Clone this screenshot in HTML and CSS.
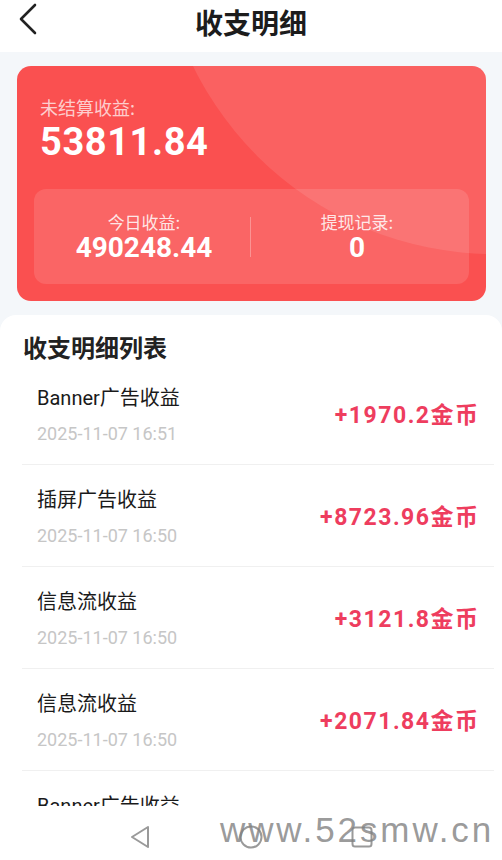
FILE: index.html
```html
<!DOCTYPE html>
<html lang="zh-CN">
<head>
<meta charset="utf-8">
<title>收支明细</title>
<link rel="stylesheet" href="styles.css">
</head>
<body>
<div class="page">
  <header class="topbar">
    <svg class="back" width="20" height="32" viewBox="0 0 20 32"><path d="M17 2 L3 16 L17 30" fill="none" stroke="#222" stroke-width="2.6" stroke-linecap="round" stroke-linejoin="round"/></svg>
    <h1 class="title">收支明细</h1>
  </header>
  <main class="content">
    <section class="card">
      <div class="card-glow"></div>
      <div class="card-label">未结算收益:</div>
      <div class="card-amount">53811.84</div>
      <div class="card-stats">
        <div class="stat">
          <div class="stat-label">今日收益:</div>
          <div class="stat-value">490248.44</div>
        </div>
        <div class="stat-divider"></div>
        <div class="stat">
          <div class="stat-label">提现记录:</div>
          <div class="stat-value">0</div>
        </div>
      </div>
    </section>
    <section class="list">
      <h2 class="list-title">收支明细列表</h2>
      <div class="item">
        <div class="item-info">
          <div class="item-name">Banner广告收益</div>
          <div class="item-date">2025-11-07 16:51</div>
        </div>
        <div class="item-amount">+1970.2金币</div>
      </div>
      <div class="item">
        <div class="item-info">
          <div class="item-name">插屏广告收益</div>
          <div class="item-date">2025-11-07 16:50</div>
        </div>
        <div class="item-amount">+8723.96金币</div>
      </div>
      <div class="item">
        <div class="item-info">
          <div class="item-name">信息流收益</div>
          <div class="item-date">2025-11-07 16:50</div>
        </div>
        <div class="item-amount">+3121.8金币</div>
      </div>
      <div class="item">
        <div class="item-info">
          <div class="item-name">信息流收益</div>
          <div class="item-date">2025-11-07 16:50</div>
        </div>
        <div class="item-amount">+2071.84金币</div>
      </div>
      <div class="item">
        <div class="item-info">
          <div class="item-name">Banner广告收益</div>
          <div class="item-date">2025-11-07 16:50</div>
        </div>
        <div class="item-amount">+1520.6金币</div>
      </div>
    </section>
  </main>
  <nav class="navbar">
    <svg class="nav-icon" width="22" height="24" viewBox="0 0 22 24"><path d="M19 2 L3 12 L19 22 Z" fill="none" stroke="#9a9a9a" stroke-width="2" stroke-linejoin="round"/></svg>
    <svg class="nav-icon" width="24" height="24" viewBox="0 0 24 24"><circle cx="12" cy="12" r="10.5" fill="none" stroke="#9a9a9a" stroke-width="2"/></svg>
    <svg class="nav-icon" width="22" height="22" viewBox="0 0 22 22"><rect x="1.5" y="1.5" width="19" height="19" rx="2.5" fill="none" stroke="#9a9a9a" stroke-width="2"/></svg>
    <div class="watermark">www.52smw.cn</div>
  </nav>
</div>
</body>
</html>
```
FILE: styles.css
```css
* { box-sizing: border-box; margin: 0; padding: 0; }
html, body { width: 502px; height: 860px; overflow: hidden; }
body {
  font-family: Roboto, "Noto Sans CJK SC", sans-serif;
  background: #f4f7fa;
  color: #1f1f1f;
}
.page { height: 860px; display: flex; flex-direction: column; }
.topbar {
  height: 52px;
  flex-shrink: 0;
  background: #ffffff;
  display: flex;
  align-items: center;
  justify-content: center;
  position: relative;
}
.back { position: absolute; left: 18px; top: 3px; }
.title {
  font-size: 28px;
  font-weight: 700;
  color: #1c1c1c;
  line-height: 40px;
  margin-top: -8px;
  font-family: "Noto Sans CJK SC", sans-serif;
}
.content {
  flex: 1;
  min-height: 0;
  overflow: hidden;
  padding-top: 14px;
  display: flex;
  flex-direction: column;
}
.card {
  flex-shrink: 0;
  margin: 0 16px 0 17px;
  height: 235px;
  border-radius: 14px;
  background: #fa5050;
  position: relative;
  overflow: hidden;
  padding: 28px 17px 0 17px;
  color: #fff;
}
.card-glow {
  position: absolute;
  left: 142px;
  top: -482px;
  width: 670px;
  height: 670px;
  border-radius: 50%;
  background: rgba(255, 255, 255, 0.1);
}
.card-label {
  position: relative;
  padding-left: 6px;
  font-family: "Noto Sans CJK SC", sans-serif;
  font-size: 18px;
  line-height: 26px;
  color: rgba(255, 255, 255, 0.72);
}
.card-amount {
  position: relative;
  padding-left: 6px;
  font-size: 38px;
  font-weight: 700;
  line-height: 44px;
  letter-spacing: 0.6px;
}
.card-stats {
  position: relative;
  margin-top: 25px;
  height: 95px;
  border-radius: 12px;
  background: rgba(255, 255, 255, 0.12);
  display: flex;
  align-items: center;
}
.stat {
  flex: 1;
  display: flex;
  flex-direction: column;
  align-items: center;
}
.stat:first-child { padding-left: 4px; }
.stat:last-child { padding-right: 6px; }
.stat-label {
  font-family: "Noto Sans CJK SC", sans-serif;
  font-size: 17px;
  line-height: 22px;
  color: rgba(255, 255, 255, 0.85);
}
.stat-value {
  font-size: 28px;
  font-weight: 700;
  line-height: 30px;
}
.stat-divider {
  width: 1px;
  height: 40px;
  background: rgba(255, 255, 255, 0.3);
}
.list {
  flex-shrink: 0;
  margin-top: 14px;
  background: #ffffff;
  border-radius: 16px 16px 0 0;
  padding: 16px 8px 0 22px;
}
.list-title {
  font-family: "Noto Sans CJK SC", sans-serif;
  font-size: 24px;
  font-weight: 700;
  line-height: 32px;
  color: #222;
  padding-left: 1px;
}
.item {
  display: flex;
  align-items: center;
  justify-content: space-between;
  padding: 22px 16px 18px 15px;
  border-bottom: 1px solid #f0f0f0;
}
.item-name {
  font-family: Roboto, "Noto Sans CJK SC", sans-serif;
  font-size: 20px;
  line-height: 26px;
  color: #1a1a1a;
}
.item-date {
  margin-top: 11px;
  font-size: 18px;
  line-height: 24px;
  color: #c6c6c6;
}
.item-amount {
  font-size: 23px;
  font-weight: 700;
  letter-spacing: 1.5px;
  margin-right: -1.5px;
  padding-bottom: 5px;
  color: #ee3d5e;
  white-space: nowrap;
}
.navbar {
  height: 54px;
  flex-shrink: 0;
  background: #ffffff;
  display: flex;
  align-items: center;
  justify-content: center;
  gap: 88px;
  position: relative;
  padding-top: 8px;
}
.nav-icon { display: block; }
.watermark {
  position: absolute;
  left: 220px;
  top: 4px;
  font-family: "Liberation Sans", Arial, sans-serif;
  font-size: 35px;
  line-height: 40px;
  letter-spacing: 2.9px;
  color: rgba(128, 128, 128, 0.8);
  white-space: nowrap;
}
```
